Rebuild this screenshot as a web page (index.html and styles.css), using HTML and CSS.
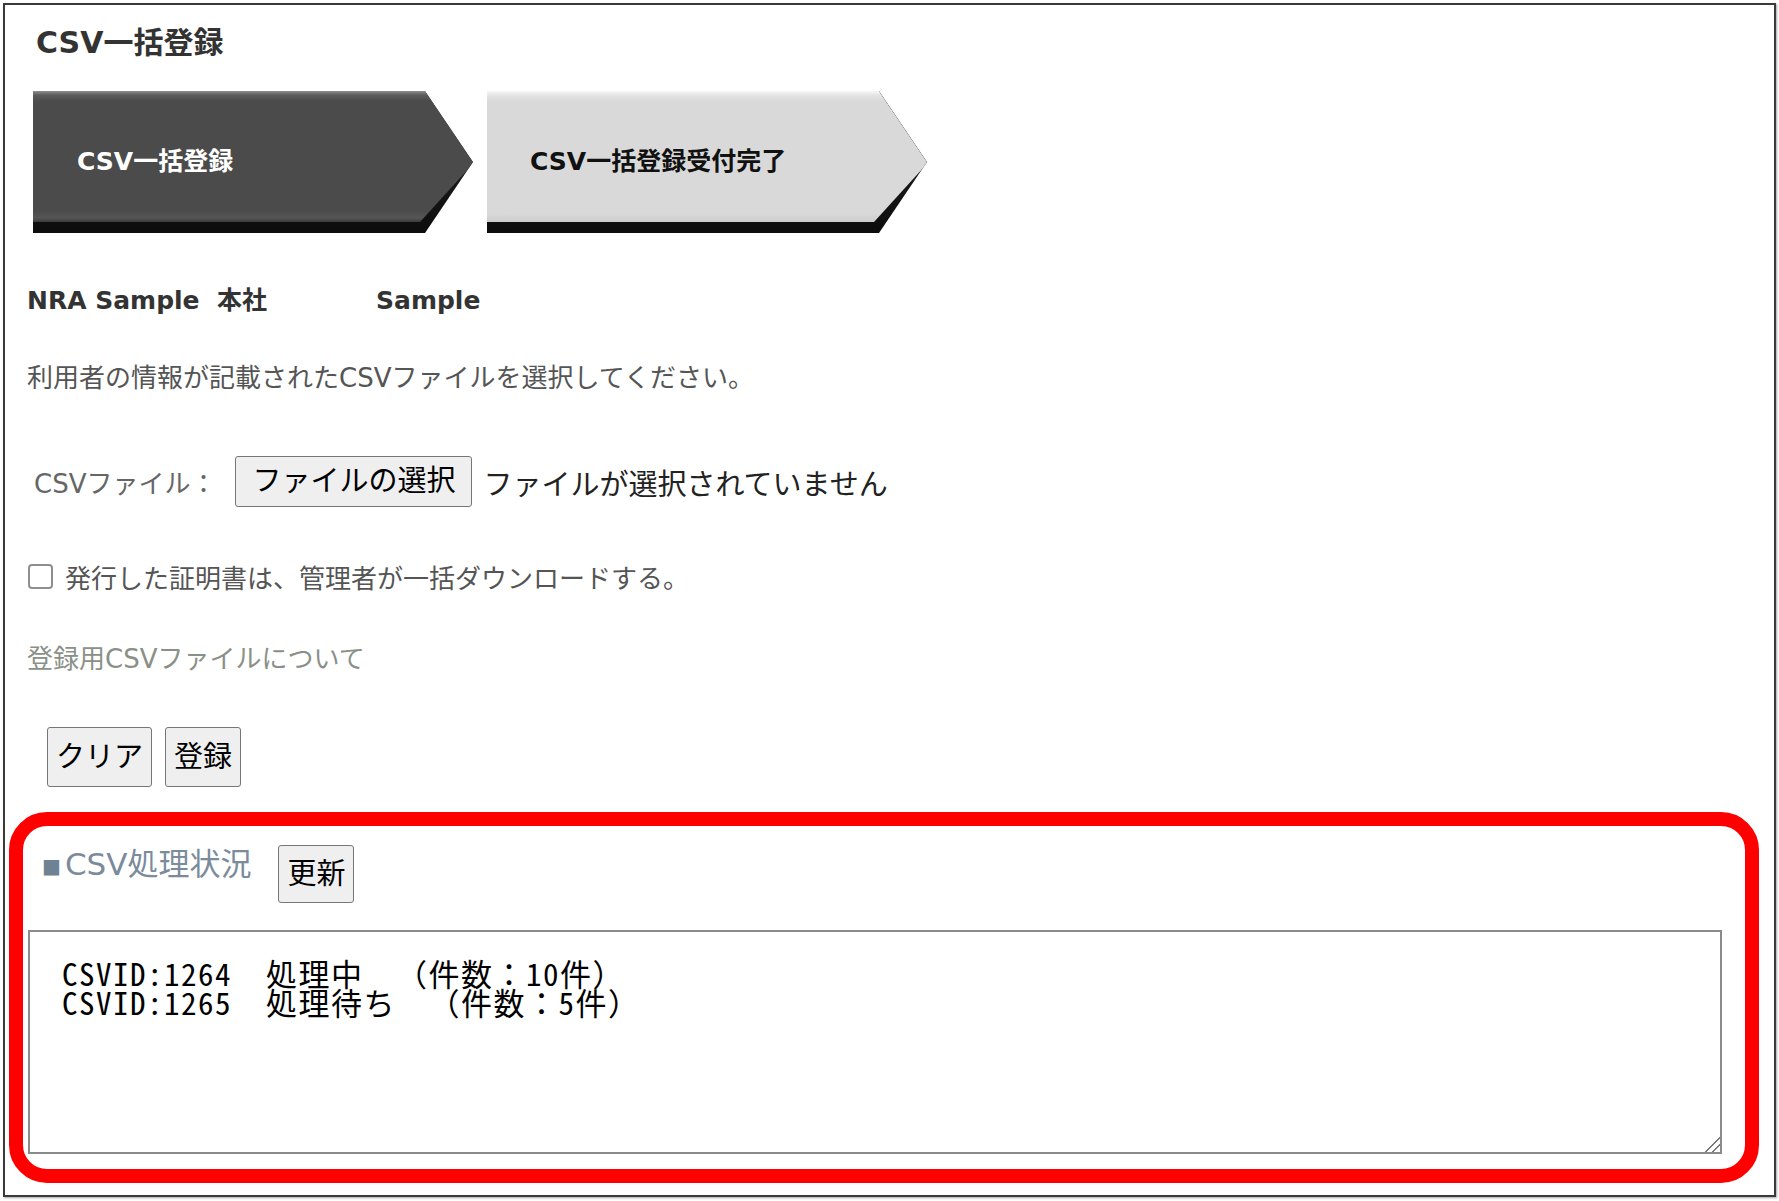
FILE: index.html
```html
<!DOCTYPE html>
<html lang="ja">
  <head>
    <meta charset="UTF-8" />
    <title>CSV一括登録</title>
    <link rel="stylesheet" href="styles.css">
  </head>
  <body>
    <div class="frame">
      <div class="content">
        <h1 class="title">CSV一括登録</h1>

        <!-- 登録ステップ -->
        <div class="steps">
          <div class="step step-current">
            <div class="step-face">CSV一括登録</div>
          </div>
          <div class="step">
            <div class="step-face">CSV一括登録受付完了</div>
          </div>
        </div>

        <p class="org">
          <span class="org-name">NRA Sample&nbsp;&nbsp;本社</span><span class="org-user">Sample</span>
        </p>

        <p class="lead">利用者の情報が記載されたCSVファイルを選択してください。</p>

        <div class="file-row">
          <span class="file-label">CSVファイル：</span>
          <button class="btn btn-file" type="button">ファイルの選択</button>
          <span class="file-name">ファイルが選択されていません</span>
        </div>

        <label class="check-row">
          <input class="check" type="checkbox" />
          発行した証明書は、管理者が一括ダウンロードする。
        </label>

        <a class="csv-link" href="#">登録用CSVファイルについて</a>

        <div class="actions">
          <button class="btn btn-action" type="button">クリア</button>
          <button class="btn btn-action" type="button">登録</button>
        </div>
      </div>

      <!-- 処理状況 -->
      <div class="status">
        <div class="status-head">
          <span class="status-title"><span class="bullet">■</span>CSV処理状況</span>
          <button class="btn btn-refresh" type="button">更新</button>
        </div>
        <textarea class="status-log" readonly>CSVID:1264  処理中　（件数：10件）
CSVID:1265  処理待ち　（件数：5件）</textarea>
      </div>
    </div>
  </body>
</html>
```

FILE: styles.css
```css
body {
  margin: 0;
  background-color: #ffffff;
  font-family: "DejaVu Sans", "Noto Sans CJK JP", sans-serif;
  color: #333333;
  text-spacing-trim: space-all;
}
.frame {
  box-sizing: border-box;
  height: 1194px;
  margin: 3px;
  padding: 0 15px 0 4px;
  border: 2px solid #3a3a3a;
  box-shadow: 1px 1px 2px rgba(0, 0, 0, 0.35);
}
.content {
  padding-left: 18px;
}
.title {
  margin: 20px 0 0 9px;
  font-size: 30px;
  line-height: 35px;
  font-weight: bold;
  color: #333333;
}

/* ステップの矢印 */
.steps {
  display: flex;
  gap: 14px;
  margin: 31px 0 0 6px;
}
.step {
  width: 440px;
  height: 142px;
  clip-path: polygon(0 0, 392px 0, 440px 71px, 392px 142px, 0 142px);
  background: linear-gradient(#2c2c2c, #0c0c0c);
}
.step-face {
  box-sizing: border-box;
  display: flex;
  align-items: center;
  height: 131px;
  padding: 4px 0 0 43px;
  clip-path: polygon(0 0, 392px 0, 440px 71px, 437px 76px, 387px 131px, 0 131px);
  background: linear-gradient(#f7f7f7 0, #e5e5e5 4px, #d9d9d9 10px, #d9d9d9 122px, #cdcdcd 131px);
  font-size: 25px;
  font-weight: bold;
  color: #111111;
}
.step-current .step-face {
  padding-left: 44px;
  background: linear-gradient(#8e8e8e 0, #5c5c5c 4px, #4b4b4b 10px, #4b4b4b 120px, #565656 127px, #3a3a3a 131px);
  color: #ffffff;
}

.org {
  margin: 51px 0 0;
  font-size: 25px;
  line-height: 34px;
  font-weight: bold;
}
.org-name {
  display: inline-block;
  width: 349px;
}
.lead {
  margin: 43px 0 0;
  font-size: 26px;
  line-height: 34px;
  color: #555555;
}

.btn {
  box-sizing: border-box;
  border: 1px solid #767676;
  border-radius: 3px;
  background-color: #efefef;
  color: #000000;
  font-family: inherit;
  font-size: 29px;
  line-height: 1;
  cursor: pointer;
}

.file-row {
  display: flex;
  align-items: center;
  height: 51px;
  margin: 61px 0 0 7px;
}
.file-label {
  margin-right: 19px;
  font-size: 26px;
  color: #666666;
}
.btn-file {
  height: 51px;
  padding: 0 16px;
}
.file-name {
  margin-left: 11px;
  font-size: 29px;
  color: #222222;
}

.check-row {
  display: flex;
  align-items: center;
  height: 34px;
  margin: 52px 0 0 1px;
  font-size: 26px;
  color: #555555;
}
.check {
  appearance: none;
  width: 25px;
  height: 25px;
  margin: 0 12px 0 0;
  border: 2px solid #8f8f8f;
  border-radius: 4px;
  background-color: #ffffff;
}

.csv-link {
  display: block;
  margin-top: 49px;
  font-size: 26px;
  line-height: 34px;
  color: #8a9088;
  text-decoration: none;
}

.actions {
  display: flex;
  gap: 13px;
  margin: 51px 0 0 20px;
}
.btn-action {
  height: 60px;
  padding: 0 8px;
}

/* 赤枠の処理状況エリア */
.status {
  margin-top: 25px;
  padding: 19px 0 15px 5px;
  border: 14px solid #ff0000;
  border-radius: 38px;
}
.status-head {
  display: flex;
  align-items: flex-start;
  margin-left: 14px;
}
.status-title {
  margin-right: 27px;
  font-size: 31px;
  line-height: 38px;
  color: #7b8b9c;
}
.bullet {
  margin-right: 4px;
  font-size: 20px;
  color: #6e8294;
  vertical-align: 2px;
}
.btn-refresh {
  height: 58px;
  padding: 0 8px;
}
.status-log {
  display: block;
  box-sizing: border-box;
  width: 1694px;
  height: 224px;
  margin-top: 27px;
  padding: 26px 32px;
  border: 2px solid #8a8a8a;
  font-family: "Noto Sans Mono CJK JP", "DejaVu Sans Mono", "Noto Sans CJK JP", monospace;
  font-size: 31px;
  line-height: 29px;
  letter-spacing: 1.5px;
  color: #000000;
  outline: none;
  text-spacing-trim: space-all;
}
.status-log::-webkit-resizer {
  background: linear-gradient(135deg, transparent 48%, #777777 48% 55%, transparent 55% 72%, #777777 72% 79%, transparent 79%);
}
```
